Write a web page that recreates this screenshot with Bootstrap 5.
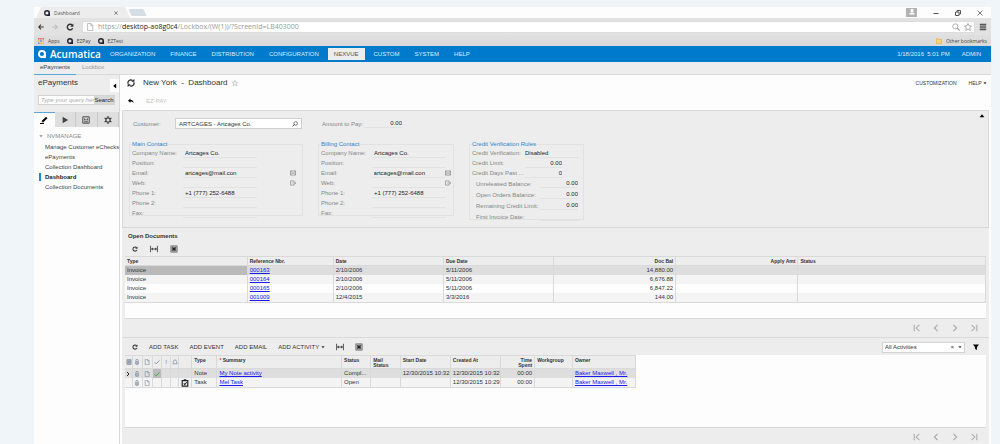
<!DOCTYPE html>
<html lang="en">
<head>
<meta charset="utf-8">
<meta name="viewport" content="width=device-width, initial-scale=1">
<title>Dashboard</title>
<link href="https://cdn.jsdelivr.net/npm/bootstrap@5.3.0/dist/css/bootstrap.min.css" rel="stylesheet">
<style>
:root{--ui:"Liberation Sans",Arial,sans-serif;--chrome:"Open Sans","Segoe UI",sans-serif;--blue:#007acc;--pane:#ededed;--line:#d9d9d9}
body{background:#eff5f9;font:6px/10px var(--ui);color:#333;overflow-x:hidden}
svg{display:block;fill:none;stroke:currentColor}
button,input,select{font:inherit;color:inherit;padding:0;border:0;background:none;border-radius:0;min-width:0}
a{color:inherit;text-decoration:none}
.i6{width:6px;height:6px}.i8{width:8px;height:8px}
.caret{width:4px;height:4px}
.shell{margin:7px 9px 0 34px;background:#fdfdfd;min-height:calc(100vh - 7px)}
/* browser frame */
.tabstrip{height:11px;font:5px/10px var(--chrome);color:#555}
.browser-tab{width:94px;height:11px;margin-left:2px;padding-left:8px;background:#ededed;clip-path:polygon(5px 0,89px 0,100% 100%,0 100%)}
.new-tab{width:15px;height:7px;background:#d5dee5;transform:skewX(25deg);border-radius:1px}
.avatar{width:11px;height:9px;background:#b3b3b3;color:#fff}
.omni{height:17px;background:#e2e2e2;padding:2px 4px}
.urlbar{background:#fff;height:12px;font:7px/11px var(--chrome);color:#999;border:1px solid #ddd;padding:0 2px 0 3px}
.urlbar b{font-weight:400;color:#222}
.marks{height:11px;background:linear-gradient(#e0e0e0,#d8d8d8);font:5px/10px var(--chrome);color:#444;padding:0 4px;gap:7px}
/* application header */
.topnav{background:var(--blue);height:16px;color:#dcefff;padding:0 10px 0 4px}
.brand-name{font:600 10px/14px var(--chrome);color:#fff;width:54px}
.menu-row{gap:3px}
.topnav li a{display:block;height:12px;line-height:12px;padding:0 6px}
.topnav li a.active{background:var(--pane);color:#555}
.subnav{background:var(--pane);height:13px;border-bottom:1px solid var(--line);color:#999}
.subnav a{line-height:11px;padding:0 6px;height:13px}
.subnav a.active{color:#444;border-bottom:1px solid #5aa5dc}
/* sidebar */
.side{width:86px;border-right:1px solid var(--line)}
.side-top{background:var(--pane);height:37px;padding-left:4px}
.t8{font-size:8px;line-height:16px}
.collapse-btn{width:9px;height:13px;background:#fdfdfd}
.search{height:10px;margin:3px 4px 0 0;border:1px solid #d3d3d3}
.search input{background:#fff;width:55px;padding-left:2px}
.search input::placeholder{color:#aaa;opacity:1;font-style:italic}
.search button{background:#d8d8d8;color:#222;line-height:8px}
.side-tabs button{height:15px;background:#dedede;border-right:1px solid #cacaca;color:#444}
.side-tabs button.active{background:#fdfdfd;border-top:1px solid #5aa5dc;border-right:0;color:#000}
.tree{padding:4px 0 0 5px}
.tree li a{padding-left:4px;border-left:2px solid transparent;display:block;line-height:8px;margin-top:2px;color:#444;white-space:nowrap}
.tree li a.active{border-left-color:#1c86d1;font-weight:700;color:#222}
/* work area */
.work-area{min-width:0}
.titlebar{padding:0 4px 0 7px;height:16px}
.title-links{font-size:5px}
.cmdbar{height:19px}
.work{padding:0 2px}
.pane{background:var(--pane)}
.form-pane{border:1px solid var(--line);height:118px;padding:7px 4px 0 6px;position:relative}
.up-btn{position:absolute;right:3px;top:2px}
.lbl{color:#858585;white-space:nowrap}
.fld{height:9px;border-bottom:1px solid #e2e2e2;color:#222}
.lookup{width:127px;height:11px;background:#fff;border:1px solid #cfcfcf;padding:0 3px}
.w-cust{width:42px}.w-amt{width:42px}.w-num{width:38px}.w-mid{width:37px}.w-wide{width:54px}
.groups{padding-top:11px;gap:15px}
.box{border:1px solid #e2e2e2;height:76px;padding:0 2px}
.box legend{float:none;width:auto;margin:-3px 0 0;font-size:6px;line-height:8px;color:#2a86cf}
.main-box{width:174px}.bill-box{width:136px}.credit-box{width:115px;height:80px}
.main-box .lbl,.bill-box .lbl{width:51px}
.main-box .fld,.bill-box .fld{width:74px;padding-left:2px}
.credit-box .lbl{width:53px}
.frow{height:10px;display:flex;align-items:center}
.credit-box .tall{height:11px;padding-left:4px}
.credit-box .tall .lbl{width:64px}
.tail{margin-left:auto;color:#777}
.money{text-align:right}
.docs-head{padding:5px 0 0 6px;height:28px}
.tool-row{gap:12px;padding:6px 0 0 4px}
.gridwrap{background:#fdfdfd;margin:0 3px;border-bottom:1px solid var(--line)}
.grid{table-layout:fixed;border-collapse:collapse;color:#333}
.grid th{font-size:5px;line-height:5px;font-weight:700;background:var(--pane);vertical-align:top;padding:2px 2px 0}
.grid td{line-height:9px;height:9px;padding:0 2px}
.grid th,.grid td{border-left:1px solid var(--line);overflow:hidden;white-space:nowrap}
.grid th:first-child,.grid td:first-child{border-left:0}
.grid thead{border-top:1px solid var(--line);border-bottom:1px solid var(--line)}
.grid tbody{border-bottom:1px solid var(--line)}
.grid tr>:last-child{border-right:1px solid var(--line)}
.grid tbody tr td{background:#fdfdfd}
.grid tbody tr.alt td{background:#f4f4f4}
.grid tbody tr.sel td{background:#dedede}
.grid tbody tr.sel td.cur{background:#bababa}
.grid a{color:#1a1aee;text-decoration:underline}
.docs th{height:9px}
.docs-wrap{height:63px}
.acts{width:59.4%}
.acts th{height:13px}
.acts th.wrap{white-space:normal}
.acts .ic{padding:0 1px;color:#778899;vertical-align:middle}
.acts-wrap{height:73px}
.pager{height:18px;color:#aaa;gap:11px;padding-right:11px}
.acts-bar{height:18px;border-top:1px solid var(--line);padding:1px 10px 0 10px}
.acts-cmds{gap:11px}
.filter{width:83px;height:11px;background:#fff;border:1px solid #d3d3d3;padding:0 2px}
.filter select{appearance:none}
.last-pane{border-bottom:1px solid var(--line)}
</style>
</head>
<body>
<svg width="0" height="0" class="position-absolute" aria-hidden="true">
<symbol id="logo" viewBox="0 0 10 10"><path fill="currentColor" stroke="none" d="M5 0a5 5 0 0 0-5 5c0 3 2 5 5 5h5V5a5 5 0 0 0-5-5zm0 2.400A2.600 2.600 0 0 1 7.500 5 2.600 2.600 0 1 1 5 2.400z"/></symbol>
<symbol id="reload" viewBox="0 0 10 10"><path stroke-width="1.700" d="M7.800 2.800A3.500 3.500 0 1 0 8.300 6.500"/><path fill="currentColor" stroke="none" d="M9.200.7v4H5.300z"/></symbol>
<symbol id="sync" viewBox="0 0 10 10"><path stroke-width="1.500" d="M1.500 6A3.500 3.500 0 0 1 7 2M8.500 4A3.500 3.500 0 0 1 3 8"/><path fill="currentColor" stroke="none" d="M5.500 3.500h3.700V0zM4.500 6.500H.8V10z"/></symbol>
<symbol id="arrow" viewBox="0 0 10 10"><path stroke-width="1.700" d="M9.500 5H1.500M5 1.200 1.300 5 5 8.800"/></symbol>
<symbol id="page" viewBox="0 0 10 10"><path stroke-width="1" d="M2 .5h4l2.500 2.500v6.500H2zM6 .5V3h2.500"/></symbol>
<symbol id="star" viewBox="0 0 10 10"><path d="m5 .6 1.300 3 3.200.3-2.400 2.200.7 3.200L5 7.700 2.200 9.300l.7-3.200L.5 3.900l3.200-.3z"/></symbol>
<symbol id="lens" viewBox="0 0 10 10"><circle cx="4.200" cy="4.200" r="3.200"/><path stroke-width="1.500" d="m6.500 6.500 3 3"/></symbol>
<symbol id="lensl" viewBox="0 0 10 10"><circle cx="6" cy="4" r="3"/><path stroke-width="1.500" d="M4 6 1 9"/></symbol>
<symbol id="menu" viewBox="0 0 10 10"><path stroke-width="2" d="M1 2h8M1 5h8M1 8h8"/></symbol>
<symbol id="fit" viewBox="0 0 10 8"><path stroke-width="1" d="M.7 0v8M9.300 0v8M2 4h6"/><path fill="currentColor" stroke="none" d="m1.300 4 2.200-2v4zM8.700 4 6.500 2v4z"/></symbol>
<symbol id="xls" viewBox="0 0 10 10"><path stroke="#777" fill="#aaa" d="M1 1h8v8H1z"/><path stroke="#222" stroke-width="1.800" d="m3 3 4 4M7 3 3 7"/></symbol>
<symbol id="mail" viewBox="0 0 10 10"><path d="M.8 1.500h8.400v7H.8zM1 2l4 3.500L9 2M1 8l3-3M9 8 6 5"/></symbol>
<symbol id="web" viewBox="0 0 10 10"><path d="M7 3V1.500H1v7h6V7M4 5h5.300M7.500 3l2 2-2 2"/></symbol>
<symbol id="clip" viewBox="0 0 10 10"><path stroke-width="1.200" d="M3 4.500V2.500a2 2 0 0 1 4 0v2"/><rect x="2.500" y="4" width="5" height="5" rx="1.500" fill="#aab4c0"/></symbol>
<symbol id="note" viewBox="0 0 10 10"><path fill="#a7b4c2" d="M1.500 1h7v8h-7zM3 3.500h4M3 5.500h4"/></symbol>
<symbol id="check" viewBox="0 0 10 10"><path stroke-width="1.500" d="m1 5.500 2.500 2.500L9 2.500"/></symbol>
<symbol id="bell" viewBox="0 0 10 10"><path stroke-width="1.200" d="M1.500 8V7C3 6 1.500 1.500 5 1.500S7 6 8.500 7v1z"/></symbol>
<symbol id="task" viewBox="0 0 10 10"><path stroke-width="1.500" d="M1.500 2h7v7h-7zM3.500 1h3"/><path stroke-width="1.300" d="m3.500 5.500 1.200 1.500L7 4"/></symbol>
<symbol id="first" viewBox="0 0 10 10"><path stroke-width="1.300" d="M1.500 1v8M8 1 4 5l4 4"/></symbol>
<symbol id="prev" viewBox="0 0 10 10"><path stroke-width="1.500" d="M7 1 3 5l4 4"/></symbol>
<symbol id="next" viewBox="0 0 10 10"><path stroke-width="1.500" d="m3 1 4 4-4 4"/></symbol>
<symbol id="last" viewBox="0 0 10 10"><path stroke-width="1.300" d="M8.500 1v8M2 1l4 4-4 4"/></symbol>
<symbol id="funnel" viewBox="0 0 10 10"><path fill="currentColor" stroke="none" d="M0 1h10L6.500 5.500V10l-3-1.500v-3z"/></symbol>
<symbol id="down" viewBox="0 0 10 10"><path fill="currentColor" stroke="none" d="M1 3h8L5 8z"/></symbol>
</svg>

<div class="shell d-flex flex-column">
  <div class="tabstrip d-flex align-items-center">
    <div class="browser-tab d-flex align-items-center gap-1"><svg class="i6" style="color:#223"><use href="#logo"/></svg><span>Dashboard</span><button class="ms-auto me-2 pe-1" aria-label="Close tab"><svg class="caret" viewBox="0 0 6 6"><path stroke="#555" d="m.5.5 5 5m0-5-5 5"/></svg></button></div>
    <div class="new-tab"></div>
    <div class="ms-auto d-flex align-items-center gap-3 pe-2">
      <span class="avatar d-flex justify-content-center"><svg class="i8" viewBox="0 0 10 10"><path fill="#fff" stroke="none" d="M5 1a2 2 0 1 1 0 4 2 2 0 0 1 0-4zM1.500 8c0-3 7-3 7 0z"/></svg></span>
      <button aria-label="Minimize"><svg class="i6" viewBox="0 0 6 6"><path d="M.5 3.500h5"/></svg></button>
      <button aria-label="Restore"><svg class="i6" viewBox="0 0 6 6"><path d="M.5 2h3.500v3.500H.5zM2 2V.5h3.500V4H4"/></svg></button>
      <button aria-label="Close"><svg class="i6" viewBox="0 0 6 6"><path stroke-width=".8" d="m.5.5 5 5m0-5-5 5"/></svg></button>
    </div>
  </div>
  <div class="omni d-flex align-items-center">
    <button aria-label="Back" class="me-2"><svg class="i6"><use href="#arrow"/></svg></button>
    <button aria-label="Forward" class="me-2" style="color:#bbb"><svg class="i6" style="transform:scaleX(-1)"><use href="#arrow"/></svg></button>
    <button aria-label="Reload" class="me-2"><svg class="i8"><use href="#reload"/></svg></button>
    <div class="urlbar flex-grow-1 d-flex align-items-center"><svg class="i8 me-1" style="color:#aaa"><use href="#page"/></svg><span>https://<b>desktop-ao8g0c4</b>/Lockbox/(W(1))/?ScreenId=LB403000</span>
      <svg class="i8 ms-auto me-1"><use href="#lens"/></svg><svg class="i8"><use href="#star"/></svg></div>
    <button aria-label="Menu" class="ms-1"><svg class="i8" style="color:#555"><use href="#menu"/></svg></button>
  </div>
  <div class="marks d-flex align-items-center">
    <a href="#" class="d-flex align-items-center gap-1"><svg class="i6" viewBox="0 0 6 6"><path stroke="none" fill="#e55" d="M0 0h1.500v1.500H0zM2.200 0h1.500v1.500H2.200zM4.500 0H6v1.500H4.500z"/><path stroke="none" fill="#4a90d9" d="M2.200 2.200h1.500v1.500H2.200zM0 4.500h1.500V6H0z"/><path stroke="none" fill="#eb3" d="M0 2.200h1.500v1.500H0zM4.500 2.200H6v1.500H4.500zM2.200 4.500h1.500V6H2.200zM4.500 4.500H6V6H4.500z"/></svg>Apps</a>
    <a href="#" class="d-flex align-items-center gap-1"><svg class="i6" style="color:#223"><use href="#logo"/></svg>EZPay</a>
    <a href="#" class="d-flex align-items-center gap-1"><svg class="i6" style="color:#223"><use href="#logo"/></svg>EZTest</a>
    <a href="#" class="d-flex align-items-center gap-1 ms-auto"><svg class="i6" viewBox="0 0 6 6"><path fill="#fbd37c" stroke="#d9a441" stroke-width=".6" d="M.3.8h2l.6.8h2.800v3.800H.3z"/></svg>Other bookmarks</a>
  </div>

  <nav class="topnav d-flex align-items-center">
    <svg class="i8 me-1 text-white"><use href="#logo"/></svg><a href="#" class="brand-name">Acumatica</a>
    <ul class="menu-row list-unstyled d-flex mb-0 ps-0 ms-0">
      <li><a href="#">ORGANIZATION</a></li><li><a href="#">FINANCE</a></li><li><a href="#">DISTRIBUTION</a></li><li><a href="#">CONFIGURATION</a></li><li><a href="#" class="active">NEXVUE</a></li><li><a href="#">CUSTOM</a></li><li><a href="#">SYSTEM</a></li><li><a href="#">HELP</a></li>
    </ul>
    <span class="ms-auto me-2 pe-1">1/18/2016&nbsp; 5:01 PM</span><a href="#">ADMIN</a>
  </nav>
  <nav class="subnav d-flex"><a href="#" class="active">ePayments</a><a href="#">Lockbox</a></nav>

  <div class="d-flex flex-grow-1">
    <aside class="side flex-shrink-0">
      <div class="side-top">
        <div class="d-flex justify-content-between"><span class="t8">ePayments</span><button class="collapse-btn d-flex align-items-center justify-content-center mt-1" aria-label="Collapse"><svg class="i6" style="color:#000;transform:rotate(90deg)"><use href="#down"/></svg></button></div>
        <form class="search d-flex"><input type="text" aria-label="Search" placeholder="Type your query here"><button type="button" class="flex-grow-1">Search</button></form>
      </div>
      <div class="side-tabs d-flex">
        <button class="active flex-fill d-flex align-items-center justify-content-center" aria-label="Edit"><svg class="i8" viewBox="0 0 10 10"><path stroke-width="2.600" d="M2.800 7.200 8.500 2"/><path stroke-width="1.300" d="M0 9.300h5"/></svg></button>
        <button class="flex-fill d-flex align-items-center justify-content-center" aria-label="Run"><svg class="i8" viewBox="0 0 10 10"><path fill="currentColor" stroke="none" d="M2 1v8l7-4z"/></svg></button>
        <button class="flex-fill d-flex align-items-center justify-content-center" aria-label="Reports"><svg class="i8" viewBox="0 0 10 10"><path stroke-width="1.200" d="M1 1h8v8H1zM2.500 7.300h5M3.300 3v2.500M5 4v1.500M6.700 3v2.500"/></svg></button>
        <button class="flex-fill d-flex align-items-center justify-content-center" aria-label="Settings"><svg class="i8" viewBox="0 0 10 10"><circle cx="5" cy="5" r="2.700" stroke-width="1.600"/><path stroke-width="1.600" d="M5 0v2M5 8v2M.7 2.500l1.700 1M7.600 6.500l1.700 1M.7 7.500l1.700-1M7.600 3.500l1.700-1"/></svg></button>
      </div>
      <div class="tree">
        <div class="d-flex align-items-center lbl"><svg class="caret me-1"><use href="#down"/></svg>NVMANAGE</div>
        <ul class="list-unstyled mb-0">
          <li><a href="#">Manage Customer eChecks</a></li><li><a href="#">ePayments</a></li><li><a href="#">Collection Dashboard</a></li><li><a href="#" class="active">Dashboard</a></li><li><a href="#">Collection Documents</a></li>
        </ul>
      </div>
    </aside>

    <main class="work-area flex-grow-1 d-flex flex-column">
      <div class="titlebar d-flex align-items-center">
        <svg class="i8 me-1" style="color:#222"><use href="#sync"/></svg>
        <span class="t8 ps-1">New York&nbsp; -&nbsp; Dashboard</span>
        <button class="ms-1" aria-label="Favorite" style="color:#aaa"><svg class="i6"><use href="#star"/></svg></button>
        <span class="title-links ms-auto d-flex gap-2"><a href="#">CUSTOMIZATION</a><a href="#" class="d-flex align-items-center ms-1">HELP&nbsp;<svg class="caret"><use href="#down"/></svg></a></span>
      </div>
      <div class="cmdbar d-flex align-items-center gap-2 ps-2">
        <button aria-label="Undo" style="color:#000"><svg class="i6" viewBox="0 0 10 10"><path fill="currentColor" stroke="none" d="M0 4.500 4 1v2c3 0 5 1.500 5.500 5C8 6.500 6 6 4 6v2z"/></svg></button>
        <button class="ms-1" style="color:#c4c4c4">EZ-PAY</button>
      </div>
      <div class="work flex-grow-1 d-flex flex-column">
        <section class="pane form-pane">
          <button class="up-btn" aria-label="Collapse form" style="color:#000"><svg class="i6" style="transform:rotate(180deg)"><use href="#down"/></svg></button>
          <div class="d-flex align-items-center ps-1">
            <label class="lbl w-cust" for="cust">Customer:</label>
            <div class="lookup d-flex align-items-center"><input id="cust" class="flex-grow-1" value="ARTCAGES - Artcages Co."><svg class="i6"><use href="#lensl"/></svg></div>
            <label class="lbl w-amt ms-3 me-1 ps-1" for="amt">Amount to Pay:</label>
            <input id="amt" class="fld money w-num" value="0.00">
          </div>
          <div class="groups d-flex align-items-start">
            <fieldset class="box main-box"><legend>Main Contact</legend>
              <div class="frow"><label class="lbl" for="m1">Company Name:</label><input id="m1" class="fld" value="Artcages Co."></div>
              <div class="frow"><label class="lbl" for="m2">Position:</label><input id="m2" class="fld"></div>
              <div class="frow"><label class="lbl" for="m3">Email:</label><input id="m3" class="fld" value="artcages@mail.con"><svg class="i6 tail me-1"><use href="#mail"/></svg></div>
              <div class="frow"><label class="lbl" for="m4">Web:</label><input id="m4" class="fld"><svg class="i6 tail me-1"><use href="#web"/></svg></div>
              <div class="frow"><label class="lbl" for="m5">Phone 1:</label><input id="m5" class="fld" value="+1 (777) 252-6488"></div>
              <div class="frow"><label class="lbl" for="m6">Phone 2:</label><input id="m6" class="fld"></div>
              <div class="frow"><label class="lbl" for="m7">Fax:</label><input id="m7" class="fld"></div>
            </fieldset>
            <fieldset class="box bill-box"><legend>Billing Contact</legend>
              <div class="frow"><label class="lbl" for="b1">Company Name:</label><input id="b1" class="fld" value="Artcages Co."></div>
              <div class="frow"><label class="lbl" for="b2">Position:</label><input id="b2" class="fld"></div>
              <div class="frow"><label class="lbl" for="b3">Email:</label><input id="b3" class="fld" value="artcages@mail.con"><svg class="i6 tail flex-shrink-0"><use href="#mail"/></svg></div>
              <div class="frow"><label class="lbl" for="b4">Web:</label><input id="b4" class="fld"><svg class="i6 tail flex-shrink-0"><use href="#web"/></svg></div>
              <div class="frow"><label class="lbl" for="b5">Phone 1:</label><input id="b5" class="fld" value="+1 (777) 252-6488"></div>
              <div class="frow"><label class="lbl" for="b6">Phone 2:</label><input id="b6" class="fld"></div>
              <div class="frow"><label class="lbl" for="b7">Fax:</label><input id="b7" class="fld"></div>
            </fieldset>
            <fieldset class="box credit-box"><legend>Credit Verification Rules</legend>
              <div class="frow"><label class="lbl" for="c1">Credit Verification:</label><input id="c1" class="fld w-wide" value="Disabled"></div>
              <div class="frow"><label class="lbl" for="c2">Credit Limit:</label><input id="c2" class="fld money w-mid" value="0.00"></div>
              <div class="frow"><label class="lbl" for="c3">Credit Days Past ...</label><input id="c3" class="fld money w-mid" value="0"></div>
              <div class="frow tall"><label class="lbl" for="c4">Unreleased Balance:</label><input id="c4" class="fld money w-num" value="0.00"></div>
              <div class="frow tall"><label class="lbl" for="c5">Open Orders Balance:</label><input id="c5" class="fld money w-num" value="0.00"></div>
              <div class="frow tall"><label class="lbl" for="c6">Remaining Credit Limit:</label><input id="c6" class="fld money w-num" value="0.00"></div>
              <div class="frow tall"><label class="lbl" for="c7">First Invoice Date:</label><input id="c7" class="fld w-num"></div>
            </fieldset>
          </div>
        </section>

        <section class="pane">
          <div class="docs-head">
            <b class="d-block lh-1">Open Documents</b>
            <div class="tool-row d-flex align-items-center">
              <button aria-label="Refresh"><svg class="i6"><use href="#reload"/></svg></button><button aria-label="Fit columns"><svg class="i8"><use href="#fit"/></svg></button><button aria-label="Export"><svg class="i8"><use href="#xls"/></svg></button>
            </div>
          </div>
          <div class="gridwrap docs-wrap">
            <table class="grid docs w-100">
              <colgroup><col style="width:14.2%"><col style="width:10%"><col style="width:12.8%"><col style="width:12.8%"><col style="width:14.2%"><col style="width:14.2%"><col></colgroup>
              <thead><tr><th>Type</th><th>Reference Nbr.</th><th>Date</th><th>Due Date</th><th class="text-end">Doc Bal</th><th class="text-end">Apply Amt</th><th>Status</th></tr></thead>
              <tbody>
                <tr class="sel"><td class="cur">Invoice</td><td><a href="#">000163</a></td><td>2/10/2006</td><td>5/11/2006</td><td class="text-end">14,880.00</td><td></td><td></td></tr>
                <tr class="alt"><td>Invoice</td><td><a href="#">000164</a></td><td>2/10/2006</td><td>5/11/2006</td><td class="text-end">6,676.88</td><td></td><td></td></tr>
                <tr><td>Invoice</td><td><a href="#">000165</a></td><td>2/10/2006</td><td>5/11/2006</td><td class="text-end">6,847.22</td><td></td><td></td></tr>
                <tr class="alt"><td>Invoice</td><td><a href="#">001009</a></td><td>12/4/2015</td><td>3/3/2016</td><td class="text-end">144.00</td><td></td><td></td></tr>
              </tbody>
            </table>
          </div>
          <div class="pager d-flex align-items-center justify-content-end">
            <button aria-label="First"><svg class="i8"><use href="#first"/></svg></button><button aria-label="Previous"><svg class="i8"><use href="#prev"/></svg></button><button aria-label="Next"><svg class="i8"><use href="#next"/></svg></button><button aria-label="Last"><svg class="i8"><use href="#last"/></svg></button>
          </div>
        </section>

        <section class="pane last-pane flex-grow-1">
          <div class="acts-bar d-flex align-items-center">
            <div class="acts-cmds d-flex align-items-center">
              <button aria-label="Refresh"><svg class="i6"><use href="#reload"/></svg></button>
              <button>ADD TASK</button><button>ADD EVENT</button><button>ADD EMAIL</button>
              <button class="d-flex align-items-center">ADD ACTIVITY&nbsp;<svg class="caret"><use href="#down"/></svg></button>
              <button aria-label="Fit columns"><svg class="i8"><use href="#fit"/></svg></button><button aria-label="Export"><svg class="i8"><use href="#xls"/></svg></button>
            </div>
            <div class="filter ms-auto me-2 d-flex align-items-center"><select class="flex-grow-1" aria-label="Filter"><option>All Activities</option></select><span class="me-1">×</span><svg class="caret"><use href="#down"/></svg></div>
            <button aria-label="Filter settings" style="color:#000"><svg class="i6"><use href="#funnel"/></svg></button>
          </div>
          <div class="gridwrap acts-wrap">
            <table class="grid acts">
              <colgroup><col style="width:1.4%"><col style="width:2%"><col style="width:2%"><col style="width:1.8%"><col style="width:1.7%"><col style="width:1.6%"><col style="width:2.6%"><col style="width:4.9%"><col style="width:24.4%"><col style="width:5.7%"><col style="width:5.8%"><col style="width:9.8%"><col style="width:9.9%"><col style="width:6.6%"><col style="width:7.4%"><col></colgroup>
              <thead><tr><th class="ic"><svg class="i6"><use href="#note"/></svg></th><th class="ic"><svg class="i6 mx-auto"><use href="#clip"/></svg></th><th class="ic"><svg class="i6 mx-auto"><use href="#page"/></svg></th><th class="ic"><svg class="i6"><use href="#check"/></svg></th><th class="ic text-center">!</th><th class="ic"><svg class="i6"><use href="#bell"/></svg></th><th></th><th>Type</th><th><span class="text-danger">*</span> Summary</th><th>Status</th><th class="wrap">Mail Status</th><th>Start Date</th><th>Created At</th><th class="text-end wrap">Time<br>Spent</th><th>Workgroup</th><th>Owner</th></tr></thead>
              <tbody>
                <tr class="sel"><td class="ic"><svg class="caret" viewBox="0 0 4 4"><path stroke="#222" d="m1 0 2 2-2 2"/></svg></td><td class="ic"><svg class="i6 mx-auto"><use href="#clip"/></svg></td><td class="ic"><svg class="i6 mx-auto"><use href="#page"/></svg></td><td class="ic cur"><svg class="i6" style="color:#3a3"><use href="#check"/></svg></td><td></td><td></td><td></td><td>Note</td><td><a href="#">My Note activity</a></td><td>Compl...</td><td></td><td>12/30/2015 10:32 AM</td><td>12/30/2015 10:32 AM</td><td class="text-end">00:00</td><td></td><td><a href="#">Baker Maxwell , Mr.</a></td></tr>
                <tr class="alt"><td></td><td class="ic"><svg class="i6 mx-auto"><use href="#clip"/></svg></td><td class="ic"><svg class="i6 mx-auto"><use href="#page"/></svg></td><td></td><td></td><td></td><td class="ic text-dark"><svg class="i8 mx-auto"><use href="#task"/></svg></td><td>Task</td><td><a href="#">Mel Task</a></td><td>Open</td><td></td><td></td><td>12/30/2015 10:29 AM</td><td class="text-end">00:00</td><td></td><td><a href="#">Baker Maxwell , Mr.</a></td></tr>
              </tbody>
            </table>
          </div>
          <div class="pager d-flex align-items-center justify-content-end">
            <button aria-label="First"><svg class="i8"><use href="#first"/></svg></button><button aria-label="Previous"><svg class="i8"><use href="#prev"/></svg></button><button aria-label="Next"><svg class="i8"><use href="#next"/></svg></button><button aria-label="Last"><svg class="i8"><use href="#last"/></svg></button>
          </div>
        </section>
      </div>
    </main>
  </div>
</div>
<script src="https://cdn.jsdelivr.net/npm/bootstrap@5.3.0/dist/js/bootstrap.bundle.min.js"></script>
</body>
</html>
